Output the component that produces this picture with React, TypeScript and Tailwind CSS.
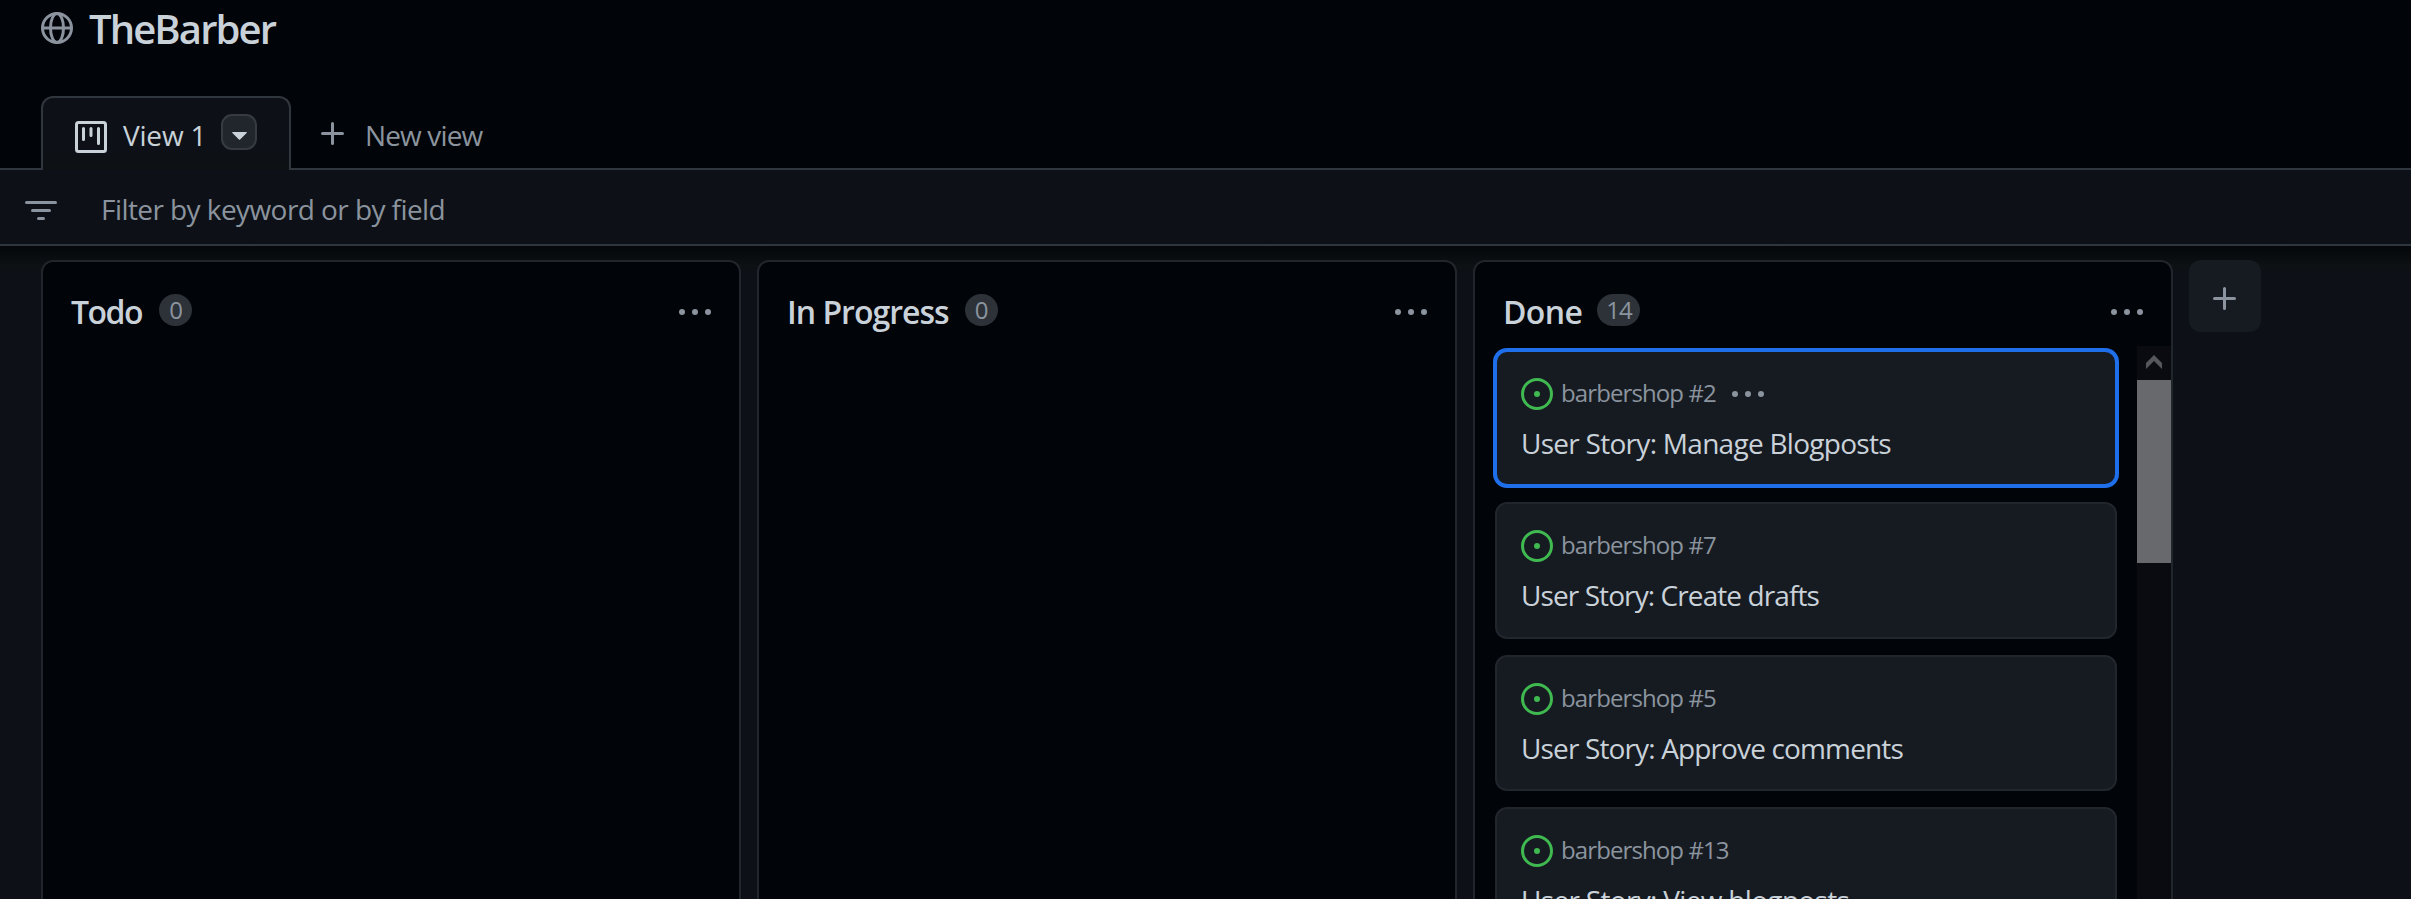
import type { ReactNode } from "react";

function Icon({ children, className = "" }: { children: ReactNode; className?: string }) {
  return (
    <svg
      viewBox="0 0 16 16"
      width="32"
      height="32"
      fill="none"
      stroke="currentColor"
      strokeWidth="1.5"
      strokeLinecap="round"
      className={`shrink-0 ${className}`}
    >
      {children}
    </svg>
  );
}

const Globe = () => (
  <Icon className="text-[#8b949e]">
    <circle cx="8" cy="8" r="7.25" />
    <ellipse cx="8" cy="8" rx="3.25" ry="7.25" />
    <path d="M1 8h14" />
  </Icon>
);

const Project = () => (
  <Icon className="text-[#c9d1d9]">
    <rect x="0.75" y="0.75" width="14.5" height="14.5" rx="1" />
    <path d="M4.25 3.75v5.5M8 3.75v3.5M11.75 3.75v7.5" />
  </Icon>
);

const Plus = () => (
  <Icon className="text-[#8b949e]">
    <path d="M7.75 2.75v10M2.75 7.75h10" />
  </Icon>
);

const Filter = () => (
  <Icon className="text-[#8b949e]">
    <path d="M.75 3.75h14.5M3.75 7.75h8.5M6.75 11.75h2.5" />
  </Icon>
);

const Kebab = () => (
  <Icon className="text-[#8b949e]">
    <g fill="currentColor" stroke="none">
      <circle cx="1.5" cy="8" r="1.5" />
      <circle cx="8" cy="8" r="1.5" />
      <circle cx="14.5" cy="8" r="1.5" />
    </g>
  </Icon>
);

const IssueOpened = () => (
  <Icon className="text-[#3fb950]">
    <circle cx="8" cy="8" r="7.25" />
    <circle cx="8" cy="8" r="1.5" fill="currentColor" stroke="none" />
  </Icon>
);

function Column({ title, titleClass, count, children }: { title: string; titleClass: string; count: number; children?: ReactNode }) {
  return (
    <section className="flex h-[660px] w-[700px] shrink-0 flex-col rounded-t-xl border-2 border-[#21262d] bg-[#010409]">
      <header className="flex h-[84px] shrink-0 items-start pr-7 pl-7">
        <h2 className={`pt-7 text-[32px] leading-[44px] font-semibold text-[#c9d1d9] ${titleClass}`}>{title}</h2>
        <span className="mt-8 ml-[17px] flex h-8 min-w-[33px] items-center justify-center rounded-full bg-[#2d3239] px-[9px] text-2xl leading-8 font-medium tracking-[-1.2px] text-[#8b949e]">
          {count}
        </span>
        <div className="mt-[34px] ml-auto">
          <Kebab />
        </div>
      </header>
      {children}
    </section>
  );
}

function Card({ repo, title, titleClass, selected = false }: { repo: string; title: string; titleClass: string; selected?: boolean }) {
  return (
    <article
      className={`h-[136.4px] shrink-0 rounded-xl border-2 bg-[#161b22] pt-[23px] pl-6 ${
        selected ? "border-[#1f6feb] ring-2 ring-[#1f6feb]" : "border-[#21262d]"
      }`}
    >
      <div className="flex h-9 items-start">
        <div className="pt-[3px]">
          <IssueOpened />
        </div>
        <span className="ml-2 text-2xl leading-9 tracking-[-0.9px] whitespace-pre text-[#8b949e]">{repo}</span>
        {selected && (
          <div className="ml-4 pt-[3px]">
            <Kebab />
          </div>
        )}
      </div>
      <h3 className={`mt-3 text-[28px] leading-10 whitespace-nowrap text-[#c9d1d9] ${titleClass}`}>{title}</h3>
    </article>
  );
}

const cards = [
  { repo: "barbershop #2", title: "User Story: Manage Blogposts", titleClass: "tracking-[-0.72px]", selected: true },
  { repo: "barbershop #7", title: "User Story: Create drafts", titleClass: "tracking-[-0.91px]" },
  { repo: "barbershop #5", title: "User Story: Approve comments", titleClass: "tracking-[-0.86px]" },
  { repo: "barbershop #13", title: "User Story: View blogposts", titleClass: "tracking-[-0.68px]" },
];

export default function App() {
  return (
    <div className="flex h-[899px] w-full flex-col overflow-hidden bg-[#0d1117] font-['Open_Sans','Noto_Sans',sans-serif]">
      <div className="flex h-[170px] shrink-0 flex-col justify-between border-b-2 border-[#30363d] bg-[#010409] pl-[41px]">
        <div className="flex items-start">
          <div className="pt-3">
            <Globe />
          </div>
          <h1 className="ml-4 text-[40px] leading-[57px] font-semibold tracking-[-1.9px] text-[#c9d1d9]">TheBarber</h1>
        </div>
        <div className="-mb-0.5 flex h-[74px] items-start">
          <div className="flex h-full w-[250px] items-start rounded-t-xl border-2 border-b-0 border-[#30363d] bg-linear-to-b from-[#0d1117] from-75% to-[#0d1113] pl-8">
            <div className="pt-[23px]">
              <Project />
            </div>
            <span className="ml-4 pt-[17px] text-[28px] leading-10 tracking-[-0.2px] text-[#c9d1d9]">View 1</span>
            <button className="mt-4 mr-8 ml-auto flex size-9 items-center justify-center rounded-[11px] border-2 border-[#363b42] bg-[#21262d]">
              <svg width="15" height="8" viewBox="0 0 15 8" className="mt-2 fill-[#c9d1d9]">
                <path d="M.7 0h13.6q1 .3.3 1L8.1 7.6q-.6.5-1.2 0L.4 1q-.6-.7.3-1z" />
              </svg>
            </button>
          </div>
          <button className="flex items-start pl-[26px] text-[#8b949e]">
            <div className="pt-[22px]">
              <Plus />
            </div>
            <span className="ml-4 pt-[19px] text-[28px] leading-10 tracking-[-0.86px]">New view</span>
          </button>
        </div>
      </div>

      <div className="flex h-[76px] shrink-0 items-center border-b-2 border-[#30363d] bg-[#0d1117] pl-[25px]">
        <div className="pt-2">
          <Filter />
        </div>
        <span className="ml-11 pt-1 text-[28px] leading-10 tracking-[-0.57px] text-[#8b949e]">Filter by keyword or by field</span>
      </div>

      <main className="flex min-h-0 grow items-start gap-4 bg-linear-to-b from-[#05080b] via-[#0d1113] via-[20px] to-[#0d1117] to-[28px] pt-[14px] pl-[41px]">
        <Column title="Todo" titleClass="tracking-[-1.5px]" count={0} />
        <Column title="In Progress" titleClass="-mr-px tracking-[-1px]" count={0} />
        <Column title="Done" titleClass="-mr-0.5 tracking-[-0.6px]" count={14}>
          <div className="flex min-h-0 grow overflow-hidden">
            <div className="flex w-[662px] flex-col gap-4 pt-1 pr-5 pl-5">
              {cards.map((card) => (
                <Card key={card.repo} {...card} />
              ))}
            </div>
            <div className="flex w-[34px] flex-col bg-[#090b10]">
              <div className="flex h-[34px] justify-center pt-[9px]">
                <svg width="16" height="14" viewBox="0 0 16 14" className="fill-[#55575b]">
                  <path d="M8 0l8 8v6L8 6l-8 8V8z" />
                </svg>
              </div>
              <div className="h-[183px] bg-[#68696c]" />
            </div>
          </div>
        </Column>
        <button className="flex size-[72px] items-center justify-center rounded-xl bg-[#161b22] pt-[5px]">
          <Plus />
        </button>
      </main>
    </div>
  );
}
